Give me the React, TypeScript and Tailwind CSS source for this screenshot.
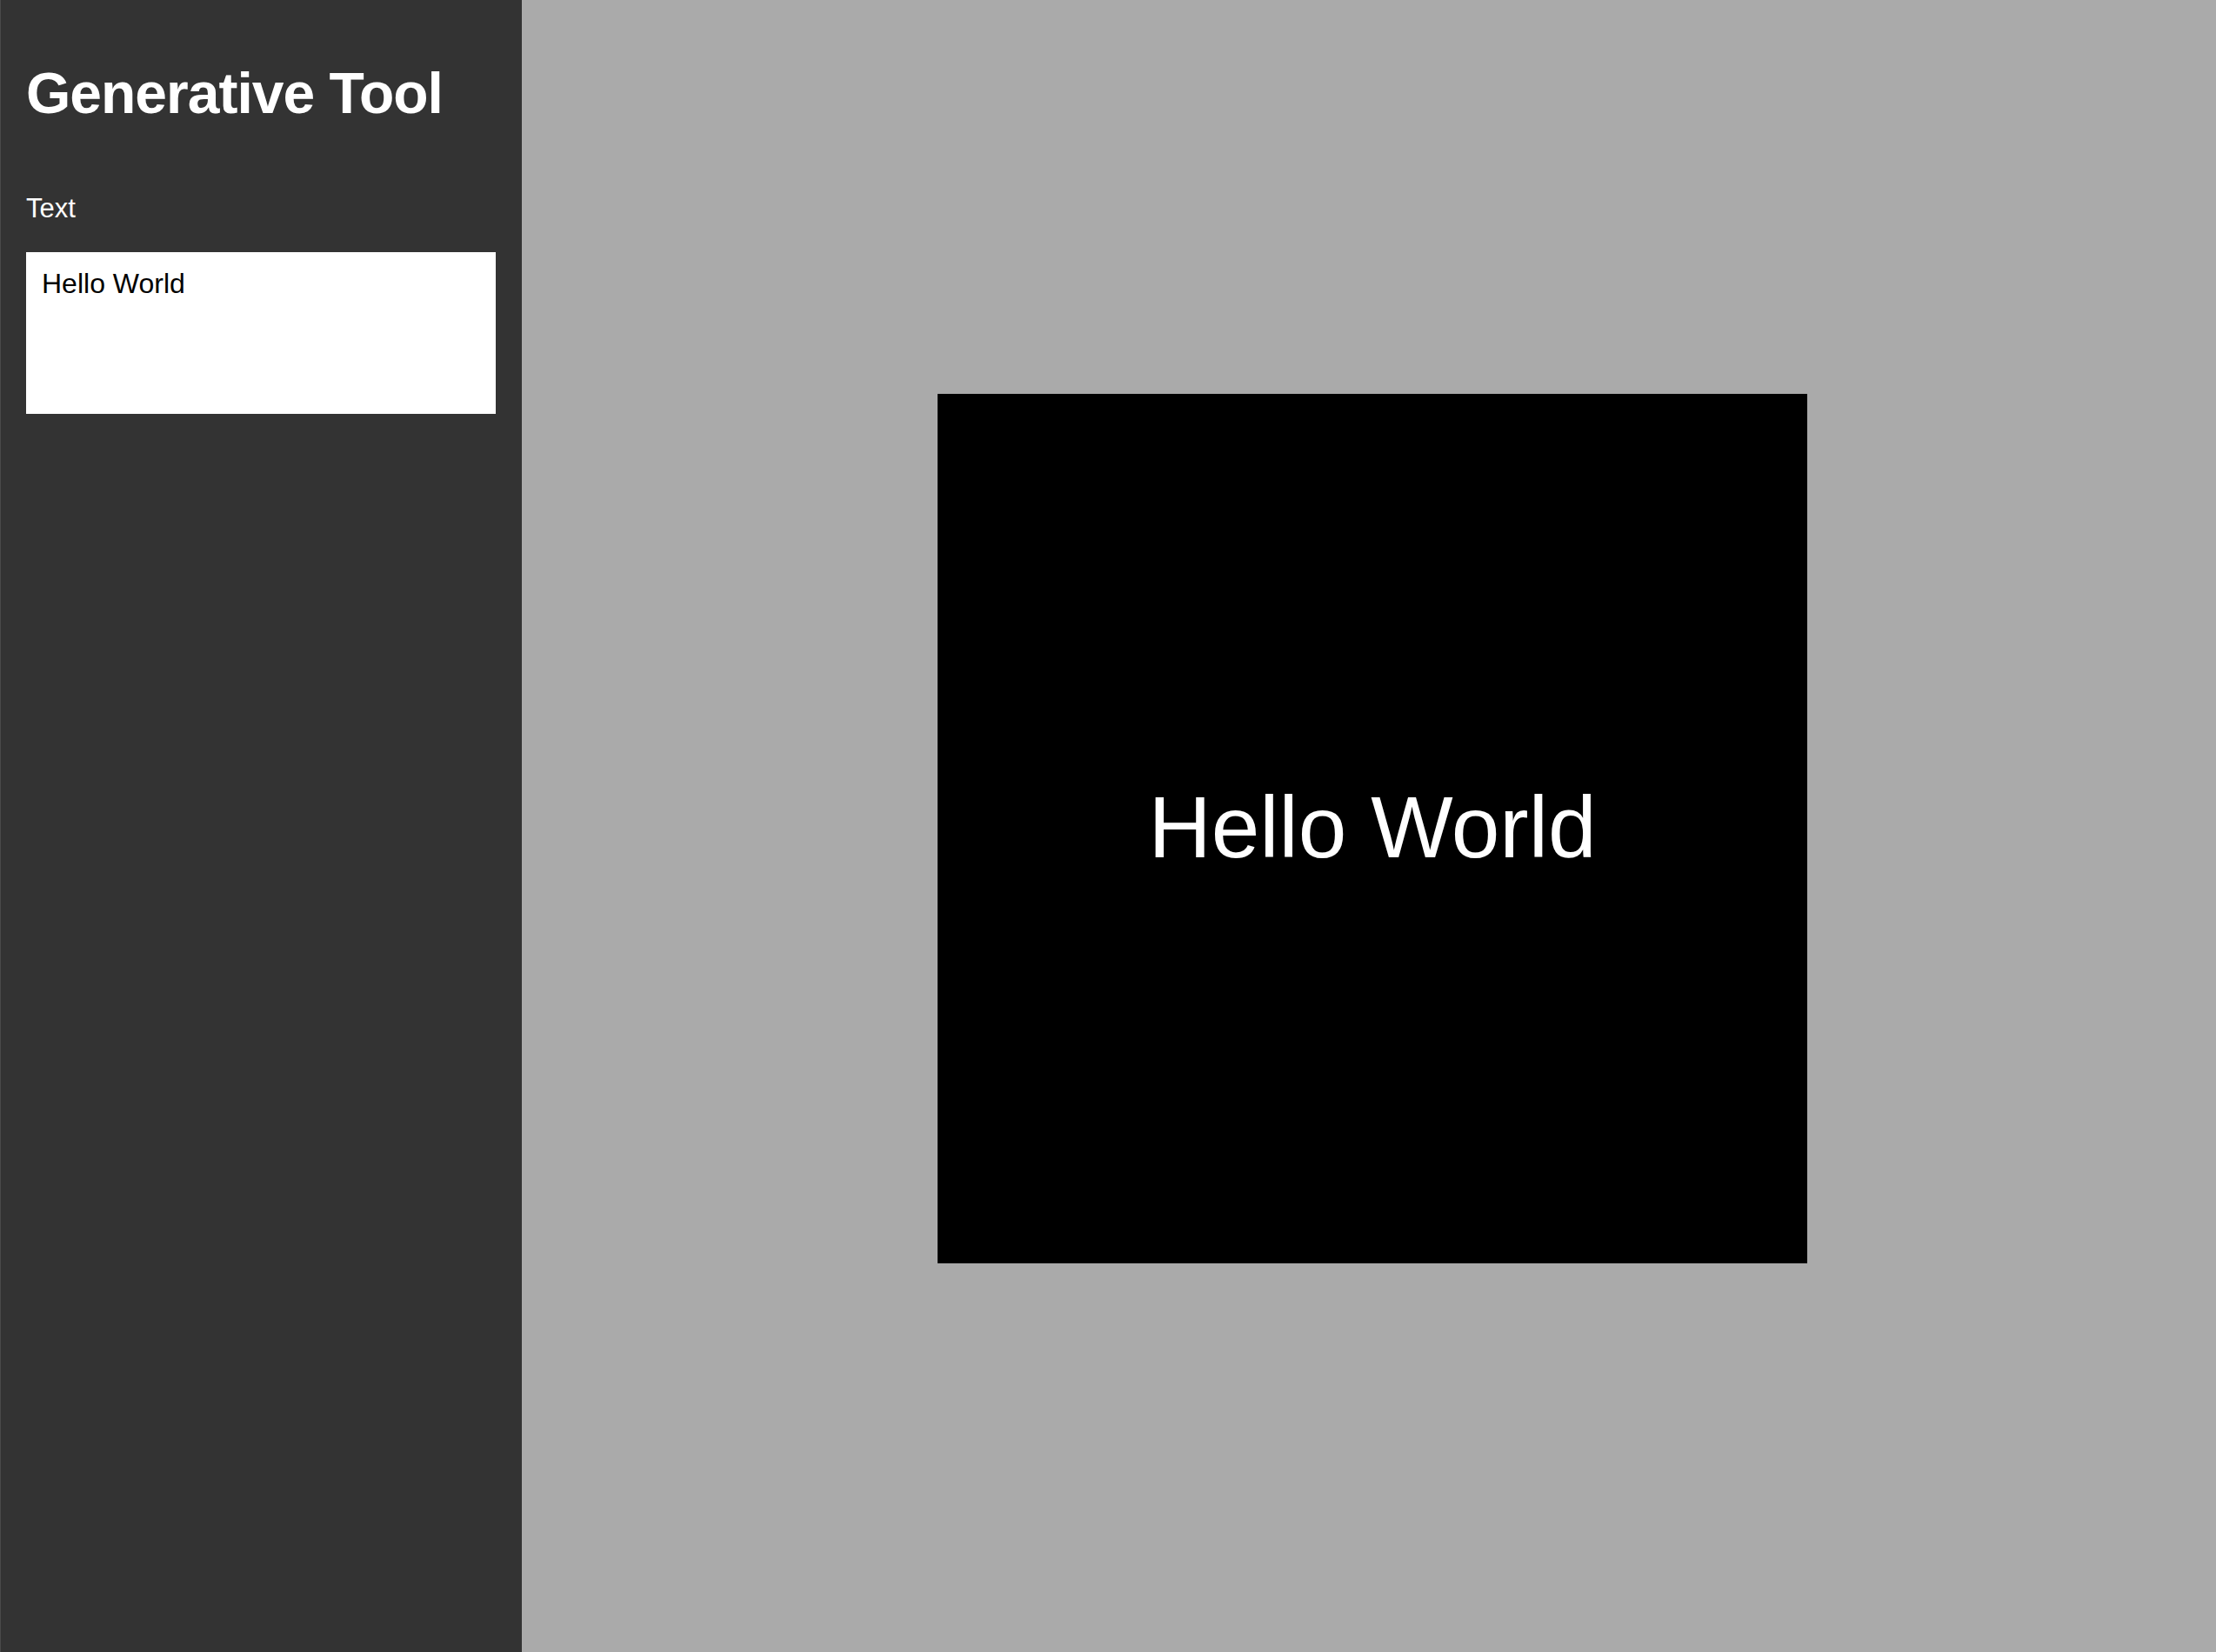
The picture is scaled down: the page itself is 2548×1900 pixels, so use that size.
import { useState } from "react";

export default function App() {
  const [text, setText] = useState("Hello World");

  return (
    <div className="flex h-screen w-full font-['Liberation_Sans',Arial,sans-serif]">
      <aside className="flex w-[600px] shrink-0 flex-col border-l border-[#4a4a4a] bg-[#333333] px-[29px] pt-[70px]">
        <h1 className="text-[66px] font-bold leading-[1.15] tracking-[-1px] text-white">
          Generative Tool
        </h1>
        <label className="mt-[76px] text-[31px] leading-[1.15] text-white">
          Text
        </label>
        <textarea
          value={text}
          onChange={(e) => setText(e.target.value)}
          className="mt-[32px] h-[186px] w-[540px] resize-none bg-white p-[18px] text-[32px] leading-[1.15] text-black outline-none"
        />
      </aside>
      <main className="flex flex-1 items-center justify-center bg-[#aaaaaa] pl-2 pt-[6px]">
        <div className="flex h-[1000px] w-[1000px] items-center justify-center bg-black">
          <span className="mb-[5px] text-[100px] leading-none text-white">{text}</span>
        </div>
      </main>
    </div>
  );
}
